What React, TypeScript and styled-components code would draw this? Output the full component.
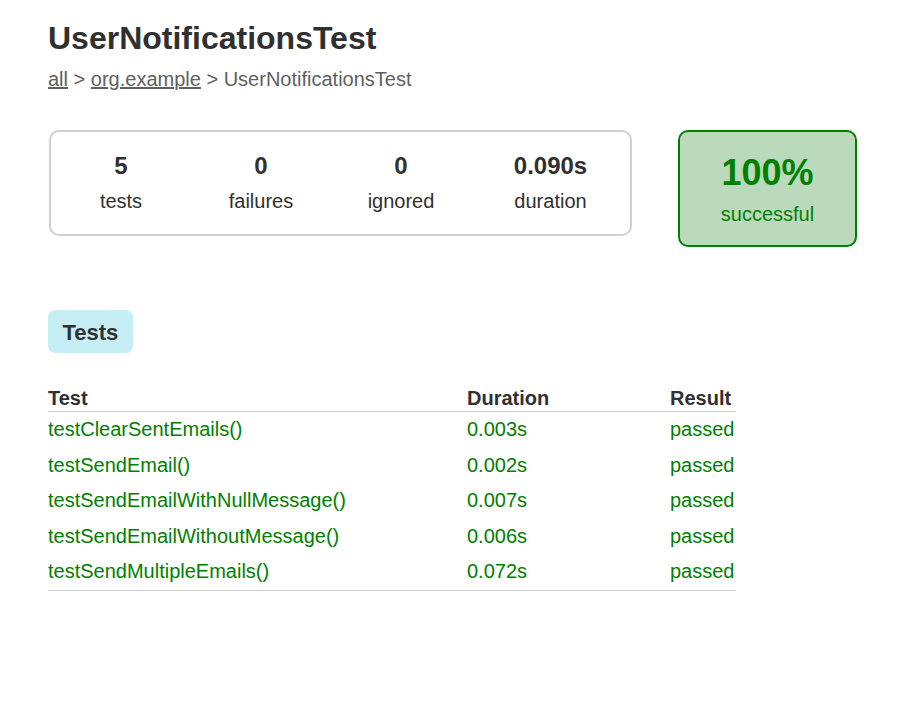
import React, { FC } from "react";
import styled, { createGlobalStyle } from "styled-components";

const colors = {
  text: "#303030",
  crumbs: "#606060",
  green: "#008000",
  greenBg: "#bbd9bb",
  border: "#d0d0d0",
  tab: "#c5eff5",
};

const GlobalStyle = createGlobalStyle`
  html, body {
    margin: 0;
    padding: 0;
    background: #fff;
  }
  body {
    font-family: "Liberation Sans", Arial, sans-serif;
    font-size: 20px;
    color: ${colors.text};
  }
`;

const Styled = {
  Content: styled.main`
    padding: 20px 48px 40px;
  `,
  Title: styled.h1`
    margin: 0 0 11px;
    font-size: 32px;
    font-weight: bold;
    line-height: 37px;
    color: ${colors.text};
  `,
  Crumbs: styled.div`
    font-size: 20px;
    line-height: 23px;
    color: ${colors.crumbs};

    & > a {
      color: ${colors.crumbs};
      text-decoration: underline;
    }
  `,
  Summary: {
    Row: styled.section`
      display: flex;
      align-items: flex-start;
      margin-top: 39px;
    `,
    Group: styled.div`
      display: grid;
      grid-template-columns: 140px 140px 140px 159px;
      width: 579px;
      margin-left: 1px;
      border: 2px solid ${colors.border};
      border-radius: 10px;
    `,
    Rate: styled.div`
      width: 175px;
      margin-left: 46px;
      border: 2px solid ${colors.green};
      border-radius: 10px;
      background-color: ${colors.greenBg};
      color: ${colors.green};
    `,
  },
  InfoBox: {
    Base: styled.div<{ $big?: boolean }>`
      padding: 20px 0 ${(p) => (p.$big ? 19 : 21)}px;
      text-align: center;

      & > p {
        margin: 0;
        line-height: 23px;
      }
      & > p:first-child {
        margin-bottom: 10px;
      }
    `,
    Counter: styled.p<{ $big?: boolean }>`
      font-size: ${(p) => (p.$big ? 36 : 24)}px;
      font-weight: bold;
      line-height: ${(p) => (p.$big ? 41 : 28)}px !important;
    `,
  },
  Tab: styled.h2`
    display: inline-block;
    margin: 63px 0 0;
    padding: 10px 14.5px 8px;
    font-size: 22px;
    line-height: 25px;
    font-weight: bold;
    background-color: ${colors.tab};
    border-radius: 7px;
    color: ${colors.text};
  `,
  Table: styled.table`
    display: table;
    margin-top: 34px;
    width: 688px;
    border-collapse: collapse;
    table-layout: fixed;
    border-bottom: 1px solid ${colors.border};

    & th {
      padding: 0 0 1px;
      text-align: left;
      font-weight: bold;
      line-height: 23px;
      border-bottom: 1px solid ${colors.border};
    }
  `,
  Cell: styled.td`
    padding: 6px 0 6.5px;
    line-height: 23px;
    color: ${colors.green};
    white-space: nowrap;
  `,
};

interface InfoProps {
  value: string;
  label: string;
  big?: boolean;
}

const InfoBox: FC<InfoProps> = ({ value, label, big }) => (
  <Styled.InfoBox.Base $big={big}>
    <Styled.InfoBox.Counter $big={big}>{value}</Styled.InfoBox.Counter>
    <p>{label}</p>
  </Styled.InfoBox.Base>
);

const tests = [
  { name: "testClearSentEmails()", duration: "0.003s" },
  { name: "testSendEmail()", duration: "0.002s" },
  { name: "testSendEmailWithNullMessage()", duration: "0.007s" },
  { name: "testSendEmailWithoutMessage()", duration: "0.006s" },
  { name: "testSendMultipleEmails()", duration: "0.072s" },
];

const App: FC = () => {
  return (
    <>
      <GlobalStyle />
      <Styled.Content>
        <Styled.Title>UserNotificationsTest</Styled.Title>
        <Styled.Crumbs>
          <a href="#">all</a> &gt; <a href="#">org.example</a> &gt;
          UserNotificationsTest
        </Styled.Crumbs>

        <Styled.Summary.Row>
          <Styled.Summary.Group>
            <InfoBox value="5" label="tests" />
            <InfoBox value="0" label="failures" />
            <InfoBox value="0" label="ignored" />
            <InfoBox value="0.090s" label="duration" />
          </Styled.Summary.Group>
          <Styled.Summary.Rate>
            <InfoBox value="100%" label="successful" big />
          </Styled.Summary.Rate>
        </Styled.Summary.Row>

        <Styled.Tab>Tests</Styled.Tab>

        <Styled.Table>
          <colgroup>
            <col style={{ width: 419 }} />
            <col style={{ width: 203 }} />
            <col style={{ width: 66 }} />
          </colgroup>
          <thead>
            <tr>
              <th>Test</th>
              <th>Duration</th>
              <th>Result</th>
            </tr>
          </thead>
          <tbody>
            {tests.map((t) => (
              <tr key={t.name}>
                <Styled.Cell>{t.name}</Styled.Cell>
                <Styled.Cell>{t.duration}</Styled.Cell>
                <Styled.Cell>passed</Styled.Cell>
              </tr>
            ))}
          </tbody>
        </Styled.Table>
      </Styled.Content>
    </>
  );
};

export default App;
